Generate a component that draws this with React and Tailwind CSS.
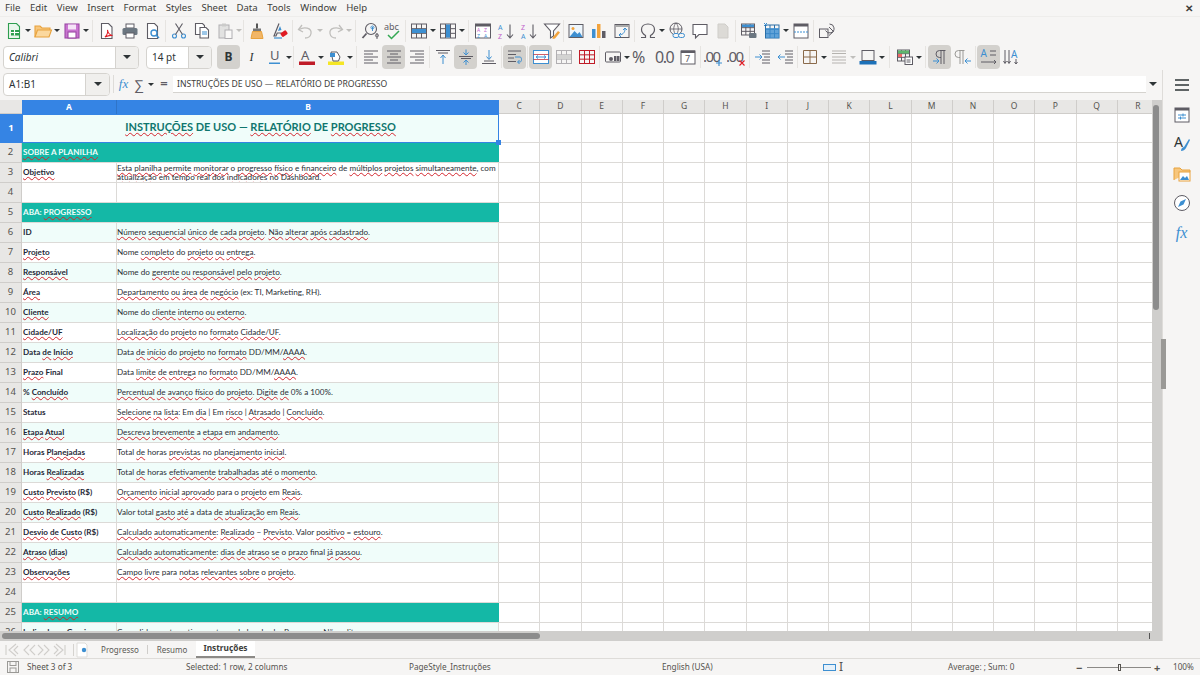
import React from "react";

const ui = { fontFamily: '"Noto Sans", sans-serif' };
const sheetFont = { fontFamily: 'Lato, "Open Sans", sans-serif' };

const B = "#3d8fd1";
const D = "#5e5c64";
const O = "#e8a23c";
const sw = { fill: "none", strokeWidth: 1.1 };

const grid = (x, y, w, h, c) => (
  <g fill="none" stroke={c} strokeWidth="1">
    <rect x={x} y={y} width={w} height={h} />
    <path d={`M${x} ${y + h / 3}h${w}M${x} ${y + (2 * h) / 3}h${w}M${x + w / 3} ${y}v${h}M${x + (2 * w) / 3} ${y}v${h}`} />
  </g>
);

const icons = {
  new: <g {...sw}><path d="M4.5 2.5h8l3 3v12h-11z" stroke="#2e9e4f" fill="#eaf6ec" /><rect x="7" y="9" width="8" height="5.5" fill="#2e9e4f" /><path d="M7 11.5h8M10.5 9v5.5" stroke="#fff" /></g>,
  open: <g strokeWidth="1.1"><path d="M2 16V5h5l2 2h8v3" fill="#f7c67c" stroke={O} /><path d="M2 16l2.5-7h14L16 16z" fill="#fbd89e" stroke={O} /></g>,
  save: <g strokeWidth="1.1"><rect x="3" y="3" width="14" height="14" fill="#c974d0" stroke="#9b4aa5" /><rect x="6" y="3.5" width="8" height="5" fill="#f5e4f7" /><rect x="6" y="11" width="8" height="6" fill="#fff" stroke="#9b4aa5" /></g>,
  pdf: <g {...sw}><path d="M4.5 2.5h7l3.5 3.5v11.5h-10.500z" stroke={D} fill="#fff" /><path d="M8 16c2-2 3-5 2.500-7 .5 3 2 5 5 5.500-3-.5-5.500.5-7.500 1.500z" stroke="#e01b24" /></g>,
  print: <g><rect x="6" y="3" width="8" height="4" fill="#fff" stroke={D} /><rect x="2.500" y="7" width="15" height="7" rx="1.500" fill="#6b7680" /><rect x="6" y="12" width="8" height="5" fill="#fff" stroke={D} /></g>,
  preview: <g {...sw}><path d="M4.500 2.500h7l3 3v12h-10z" stroke={D} fill="#fff" /><circle cx="11" cy="12" r="3" stroke={B} strokeWidth="1.400" /><path d="M13 14l3 3" stroke={B} strokeWidth="1.600" /></g>,
  cut: <g {...sw} stroke={B}><circle cx="5.500" cy="15" r="2" /><circle cx="14.500" cy="15" r="2" /><path d="M6.500 13.500L13.500 2.500M13.500 13.500L6.500 2.500" stroke={D} /></g>,
  copy: <g {...sw}><path d="M3.500 2.500h7l2 2v9h-9z" stroke={D} fill="#fff" /><path d="M8 6.500h6l2.500 2.500v8h-8.500z" stroke={D} fill="#fff" /><path d="M10 11h5M10 13h5" stroke={B} /></g>,
  paste: <g opacity=".45"><rect x="4" y="4" width="10" height="13" fill="#ccc" stroke={D} /><rect x="7" y="2.500" width="4" height="3" fill="#999" /><rect x="10" y="9" width="7" height="8.500" fill="#fff" stroke={D} /></g>,
  clone: <g><path d="M9 2.500h2v5H9z" fill="#555" /><rect x="6" y="7.500" width="8" height="3" fill="#777" /><path d="M5.500 10.500h9l1.500 7H4z" fill="#f2b666" stroke={O} /></g>,
  clear: <g><path d="M9 2.500L4 15h2l1.200-3h4l.8 2" fill="none" stroke={D} strokeWidth="1.200" /><path d="M8 10l2-5 1.500 4z" fill={B} /><rect x="11" y="10.500" width="6.500" height="4.500" rx="1" fill="#e01b24" transform="rotate(-35 14 13)" /><path d="M4 17h8" stroke={B} strokeWidth="1.200" /></g>,
  undo: <g fill="none" stroke="#c0bfbc" strokeWidth="1.300"><path d="M6 4L2.500 8.500 7 11" /><path d="M3 8.500c5-3 13-2 12 4-.5 3-3 4.500-6 4.500" /></g>,
  redo: <g fill="none" stroke="#c0bfbc" strokeWidth="1.300"><path d="M14 4l3.500 4.500L13 11" /><path d="M17 8.500c-5-3-13-2-12 4 .5 3 3 4.500 6 4.500" /></g>,
  find: <g fill="none"><circle cx="11" cy="8" r="5.500" stroke={D} strokeWidth="1.100" /><path d="M6.500 12.500L2.500 17" stroke={D} strokeWidth="1.800" /><path d="M12.500 6v4M12.500 8a1.500 1.500 0 1 0-.1 0" stroke={B} /><path d="M17 12v6M17 16a1.500 1.500 0 1 0-.1 0" stroke={D} /></g>,
  spell: <g><text x="1" y="9" fontSize="9" fill={D} fontFamily="Noto Sans">abc</text><path d="M5 14l3.500 3.500L16 10" fill="none" stroke="#33a852" strokeWidth="1.500" /></g>,
  rows: <g>{grid(2.5, 3, 15, 14, D)}<rect x="3" y="8" width="14" height="4" fill={B} /></g>,
  cols: <g>{grid(2.5, 3, 15, 14, D)}<rect x="8" y="3.500" width="4" height="13" fill={B} /></g>,
  sort: <g><rect x="2.500" y="3" width="15" height="14" fill="#fff" stroke={D} /><rect x="2.500" y="3" width="15" height="2.500" fill={D} /><text x="4" y="10.500" fontSize="5" fill="#c061cb" fontFamily="Noto Sans">A</text><text x="11" y="10.500" fontSize="5" fill="#c061cb" fontFamily="Noto Sans">Z</text><text x="4" y="16.500" fontSize="5" fill={B} fontFamily="Noto Sans">Z</text><text x="11" y="16.500" fontSize="5" fill={B} fontFamily="Noto Sans">A</text></g>,
  asc: <g><text x="2" y="9" fontSize="7" fill={B} fontFamily="Noto Sans">A</text><text x="2" y="18" fontSize="7" fill="#c061cb" fontFamily="Noto Sans">Z</text><path d="M14 3.500v13M11 13.500l3 3.500 3-3.500" fill="none" stroke={D} strokeWidth="1.100" /></g>,
  desc: <g><text x="2" y="9" fontSize="7" fill="#c061cb" fontFamily="Noto Sans">Z</text><text x="2" y="18" fontSize="7" fill={B} fontFamily="Noto Sans">A</text><path d="M14 3.500v13M11 13.500l3 3.500 3-3.500" fill="none" stroke={D} strokeWidth="1.100" /></g>,
  filter: <g><path d="M2.500 3h15l-6 7v5l-3 2v-7z" fill="#fff" stroke={D} strokeWidth="1.100" /><path d="M11 16l5-6 2 1.500-5 6-2.500.5z" fill="#f2a33c" /></g>,
  image: <g><rect x="3" y="3.500" width="14" height="13" fill="#eef6fc" stroke={D} /><circle cx="7" cy="7.500" r="1.500" fill="#f2a33c" /><path d="M3.500 16l5-6 3 3 2-2 3 5z" fill={B} /></g>,
  chart: <g><rect x="3" y="8" width="3.500" height="9" fill={B} /><rect x="8" y="3" width="3.500" height="14" fill="#f2a33c" /><rect x="13" y="10" width="3.500" height="7" fill={D} /></g>,
  pivot: <g><rect x="3" y="3.500" width="14" height="13" fill="#f6f5f4" stroke={D} /><rect x="3.500" y="4" width="13" height="2" fill="#aaa" /><path d="M7 14c3 0 6-2 6-6M11 9l2-2 2 2M9 12l-2 2 2 2" fill="none" stroke={B} /></g>,
  omega: <path d="M3 16.500h4.500v-2C5 13 3.500 11 3.500 8.500 3.500 5.200 6.300 3 10 3s6.500 2.200 6.500 5.500c0 2.500-1.500 4.500-4 6v2H17" fill="none" stroke={D} strokeWidth="1.200" />,
  link: <g fill="none"><circle cx="9" cy="8" r="6" stroke={D} /><path d="M3 8h12M9 2c-3 3-3 9 0 12M9 2c3 3 3 9 0 12" stroke={D} strokeWidth=".8" /><rect x="6" y="12.500" width="6" height="4" rx="2" fill="#f6f5f4" stroke={B} /><rect x="11.500" y="12.500" width="6" height="4" rx="2" fill="#f6f5f4" stroke={B} /></g>,
  comment: <path d="M3 3.500h14v10H9l-3.500 3.500v-3.500H3z" fill="#fff" stroke={D} strokeWidth="1.100" />,
  header: <path d="M5 3h7l3 3v11H5z" fill="#dcdad6" stroke="#cfcdc9" />,
  area: <g>{grid(2.5, 3, 13, 11, D)}<rect x="3" y="3.500" width="12" height="2.500" fill={B} /><rect x="10" y="12" width="7.500" height="5" rx="1" fill="#6b7680" /></g>,
  freeze: <g>{grid(3.5, 4, 13.5, 13, "#2a6ea6")}<rect x="4" y="7" width="13" height="10" fill={B} opacity=".8" /><path d="M2 2l3 3M5 2L2 5" stroke={B} /></g>,
  split: <g><rect x="3" y="3" width="14" height="14" fill="#fff" stroke={D} /><rect x="3" y="3" width="14" height="2.500" fill={D} /><path d="M3 11h14" stroke={B} strokeDasharray="2 1" /></g>,
  shapes: <g fill="none" stroke={D}><rect x="2.500" y="8" width="8.500" height="8.500" fill="#f6f5f4" /><path d="M12.500 3a4.500 4.500 0 1 1-4 6.500" /><path d="M12 6l4.500 4.500-4.500 4" /></g>,
  underline: <g><text x="5" y="13" fontSize="13" fill={D} fontFamily="Noto Sans">U</text><rect x="4" y="15.500" width="11" height="1.500" fill={B} /></g>,
  color: <g><text x="4" y="13" fontSize="13" fill={D} fontFamily="Noto Sans">A</text><rect x="2" y="14.500" width="16" height="3.500" fill="#c01c28" /></g>,
  hl: <g><rect x="2" y="14.500" width="16" height="3.500" fill="#f5e625" /><path d="M5 5h6l3 5-1.500 4H7z" fill="#fff" stroke={D} /><rect x="4" y="6" width="5" height="4" fill={B} /></g>,
  left: <path d="M3 4h14M3 7h9M3 10h14M3 13h9M3 16h14" stroke={D} fill="none" />,
  center: <path d="M3 4h14M6 7h8M3 10h14M6 13h8M3 16h14" stroke={D} fill="none" />,
  right: <path d="M3 4h14M8 7h9M3 10h14M8 13h9M3 16h14" stroke={D} fill="none" />,
  top: <g fill="none"><path d="M3 3.500h14M5 6h10" stroke={D} /><path d="M10 8v9M7.500 11l2.500-3 2.500 3" stroke={B} /></g>,
  middle: <g fill="none"><path d="M3 9.500h14M5 11.500h10" stroke={D} /><path d="M10 2.500v5M7.500 5.500l2.500 2.500 2.500-2.500M10 18v-5M7.500 15.500l2.500-2.500 2.500 2.500" stroke={B} /></g>,
  bottom: <g fill="none"><path d="M3 16.500h14M5 14h10" stroke={D} /><path d="M10 3v9M7.500 9.500l2.500 3 2.500-3" stroke={B} /></g>,
  wrap: <g fill="none"><path d="M3 4h13M3 7.500h8M3 11h6M3 14.500h8" stroke={D} /><path d="M10 10h5c2 0 2 5 0 5h-2M14.500 13l-2 2 2 2" stroke={B} /></g>,
  merge: <g><rect x="2.500" y="3.500" width="15" height="13" fill="#fff" stroke={B} /><path d="M2.500 7.500h15M2.500 12.500h15" stroke="#c01c28" opacity=".7" /><path d="M6 10h8M5 10l2-1.500M5 10l2 1.500M15 10l-2-1.500M15 10l-2 1.500" stroke={B} /></g>,
  merge2: <g opacity=".45">{grid(2.5, 3.5, 15, 13, D)}<rect x="3" y="7.800" width="14" height="4.400" fill="#aaa" /></g>,
  unmerge: <g>{grid(2.5, 3.5, 15, 13, "#c01c28")}</g>,
  format: <g><rect x="2.500" y="5" width="15" height="10" rx="1" fill="#f6f5f4" stroke={D} /><circle cx="8" cy="12" r="2" fill={D} /><rect x="11" y="9" width="2.500" height="5" fill={D} /><rect x="14" y="9" width="2.500" height="5" fill={D} /></g>,
  percent: <text x="0" y="16" fontSize="16" fill={D} fontFamily="Noto Sans">%</text>,
  num: <text x="0" y="16" fontSize="16" fill={D} letterSpacing="-1.500" fontFamily="Noto Sans">0.0</text>,
  date: <g><rect x="3" y="4" width="14" height="13" fill="#fff" stroke={D} /><rect x="3" y="3.500" width="14" height="2.500" fill={D} /><text x="7" y="15" fontSize="9" fill={D} fontFamily="Noto Sans">7</text></g>,
  addDec: <g><text x="-1" y="15" fontSize="15" fill={D} letterSpacing="-1.500" fontFamily="Noto Sans">.00</text><path d="M15 13v6M12 16h6" stroke={B} strokeWidth="1.200" /></g>,
  delDec: <g><text x="-1" y="15" fontSize="15" fill={D} letterSpacing="-1.500" fontFamily="Noto Sans">.00</text><path d="M12.500 13.500l5 5M17.500 13.500l-5 5" stroke="#e01b24" strokeWidth="1.100" /></g>,
  indent: <g fill="none"><path d="M9 4h8M9 7h8M11 10h6M9 13h8M9 16h8" stroke={D} /><path d="M2 10h7M6.500 7.500l2.500 2.500-2.500 2.500" stroke={B} /></g>,
  outdent: <g fill="none"><path d="M9 4h8M9 7h8M11 10h6M9 13h8M9 16h8" stroke={D} /><path d="M9 10H2M4.500 7.500L2 10l2.500 2.500" stroke={B} /></g>,
  borders: <path d="M3.500 3.500h13v13h-13zM10 3.500v13M3.500 10h13" fill="none" stroke="#8a6a4a" />,
  bstyle: <path d="M3 4h14M3 6.500h14M3 10h14M3 13h14M3 16h14" fill="none" stroke="#b5b3af" strokeWidth="1.200" />,
  bcolor: <g><rect x="4" y="3.500" width="12" height="10" fill="#f6f5f4" stroke={D} /><rect x="1.500" y="14" width="17" height="3.500" fill="#1c71b8" /></g>,
  cond: <g>{grid(2.5, 3, 12, 11, D)}<rect x="3" y="3.500" width="11" height="3" fill="#5fb56c" /><rect x="3" y="7" width="4" height="3" fill="#e66" /><rect x="10" y="10" width="7.500" height="7.500" fill="#fff" stroke={D} /><path d="M11.500 13h4M11.500 15h4" stroke={D} /></g>,
  ltr: <g fill="none"><path d="M11 3v14M14 3v14M15.500 3.500H9.500a3.500 3.500 0 0 0 0 7H11" stroke={D} /><path d="M3 14h6M6.500 11.500L9 14l-2.500 2.500" stroke={B} /></g>,
  rtl: <g fill="none"><path d="M7 3v14M10 3v14M11.500 3.500H5.500a3.500 3.500 0 0 0 0 7H7" stroke="#9a9996" /><path d="M18 14h-6M14.500 11.500L12 14l2.500 2.500" stroke={B} /></g>,
  horiz: <g fill="none"><text x="1.500" y="10" fontSize="10" fill={B} stroke="none" fontFamily="Noto Sans">A</text><path d="M11 4h6M11 8h6M2 15h15M15 13l2 2-2 2" stroke={D} /></g>,
  vert: <g fill="none"><text x="9" y="11" fontSize="10" fill={B} stroke="none" fontFamily="Noto Sans">A</text><path d="M3 3v13M1.500 14l1.500 2.500L4.500 14M7 3v13M5.500 14L7 16.500 8.500 14M14 12v5M12.500 15l1.500 2 1.500-2" stroke={D} /></g>,
};

const row1 = ["new", "v", "open", "v", "save", "v", "s6", "pdf", "print", "preview", "s3", "cut", "copy", "paste", "d", "s3", "clone", "clear", "s3", "undo", "d", "redo", "d", "s6", "find", "spell", "s3", "rows", "v", "cols", "v", "s6", "sort", "asc", "desc", "filter", "s1", "image", "chart", "pivot", "s3", "omega", "v", "link", "comment", "header", "s3", "area", "freeze", "v", "split", "s3", "shapes"];
const row2 = ["s3", "color", "v", "hl", "v", "s6", "left", "*center", "right", "s3", "top", "*middle", "bottom", "s3", "*wrap", "s3", "*merge", "merge2", "unmerge", "s3", "format", "v", "percent", "num", "date", "s3", "addDec", "delDec", "s3", "indent", "outdent", "s1", "borders", "v", "bstyle", "d", "bcolor", "v", "s8", "cond", "v", "s6", "*ltr", "rtl", "s3", "*horiz", "vert"];

const sepClass = {
  s1: "w-px",
  s3: "w-[3px]",
  s6: "w-[6px]",
  s8: "w-[8px]",
};

function Caret({ faint }) {
  return (
    <span className={`w-0 h-0 border-x-[3px] border-x-transparent border-t-[3px] ${faint ? "border-t-[#c0bfbc]" : "border-t-[#2e3436]"}`} />
  );
}

function Tool({ name }) {
  if (sepClass[name]) {
    return (
      <div className={`${sepClass[name]} h-[22px] flex justify-center shrink-0`}>
        <div className="w-px h-full bg-[#e6e4e1]" />
      </div>
    );
  }
  if (name === "v" || name === "d") {
    return (
      <div className="w-[6px] h-[22px] flex items-center justify-center shrink-0">
        <Caret faint={name === "d"} />
      </div>
    );
  }
  const active = name[0] === "*";
  const key = active ? name.slice(1) : name;
  return (
    <div className={`w-[23px] h-[24px] rounded-[4px] flex items-center justify-center shrink-0 ${active ? "bg-[#d3d1cd]" : ""}`}>
      <svg width="20" height="20" viewBox="0 0 20 20">{icons[key]}</svg>
    </div>
  );
}

function Combo({ text, boxClass, arrowClass, italic }) {
  return (
    <div className={`h-[23px] flex border border-[#d5d3cf] rounded-[4px] overflow-hidden bg-white shrink-0 ${boxClass}`}>
      <div className={`flex-1 pl-[5px] flex items-center text-[10px] text-[#2e3436] ${italic ? "italic" : ""}`}>{text}</div>
      <div className={`${arrowClass} bg-[#f0efed] border-l border-[#d5d3cf] flex items-center justify-center`}>
        <span className="w-0 h-0 border-x-[4px] border-x-transparent border-t-[4px] border-t-[#2e3436]" />
      </div>
    </div>
  );
}

function Marked({ text }) {
  // *palavra* = sublinhado do corretor ortografico
  return text.split("*").map((part, i) =>
    i % 2 ? (
      <span key={i} className="underline decoration-wavy decoration-[#d3262e] decoration-[0.7px] underline-offset-[1px]">{part}</span>
    ) : (
      <span key={i}>{part}</span>
    )
  );
}

const rows = [
  { n: 2, section: "*SOBRE* A *PLANILHA*" },
  { n: 3, a: "*Objetivo*", two: ["*Esta* *planilha* *permite* *monitorar* o *progresso* *físico* e *financeiro* de *múltiplos* *projetos* *simultaneamente*, com", "*atualização* em tempo real dos *indicadores* no Dashboard."] },
  { n: 4 },
  { n: 5, section: "ABA: *PROGRESSO*" },
  { n: 6, alt: true, a: "ID", b: "*Número* *sequencial* *único* *de* *cada* *projeto*. *Não* *alterar* *após* *cadastrado*." },
  { n: 7, a: "*Projeto*", b: "Nome *completo* do *projeto* *ou* *entrega*." },
  { n: 8, alt: true, a: "*Responsável*", b: "Nome do *gerente* *ou* *responsável* *pelo* *projeto*." },
  { n: 9, a: "*Área*", b: "*Departamento* *ou* *área* *de* *negócio* (ex: TI, Marketing, RH)." },
  { n: 10, alt: true, a: "*Cliente*", b: "Nome do *cliente* *interno* *ou* *externo*." },
  { n: 11, a: "*Cidade/UF*", b: "*Localização* do *projeto* no *formato* *Cidade/UF*." },
  { n: 12, alt: true, a: "Data *de* *Início*", b: "Data *de* *início* do *projeto* no *formato* DD/MM/*AAAA*." },
  { n: 13, a: "*Prazo* Final", b: "Data *limite* *de* *entrega* no *formato* DD/MM/*AAAA*." },
  { n: 14, alt: true, a: "% *Concluído*", b: "*Percentual* *de* *avanço* *físico* do *projeto*. *Digite* *de* 0% a 100%." },
  { n: 15, a: "Status", b: "*Selecione* *na* *lista*: Em *dia* | Em *risco* | *Atrasado* | *Concluído*." },
  { n: 16, alt: true, a: "*Etapa* *Atual*", b: "*Descreva* *brevemente* a *etapa* em *andamento*." },
  { n: 17, a: "Horas *Planejadas*", b: "Total *de* horas *previstas* no *planejamento* *inicial*." },
  { n: 18, alt: true, a: "Horas *Realizadas*", b: "Total *de* horas *efetivamente* *trabalhadas* *até* o *momento*." },
  { n: 19, a: "*Custo* *Previsto* (R$)", b: "*Orçamento* *inicial* *aprovado* para o *projeto* em *Reais*." },
  { n: 20, alt: true, a: "*Custo* *Realizado* (R$)", b: "Valor total *gasto* *até* a data *de* *atualização* em *Reais*." },
  { n: 21, a: "*Desvio* *de* *Custo* (R$)", b: "*Calculado* *automaticamente*: *Realizado* − *Previsto*. Valor *positivo* = *estouro*." },
  { n: 22, alt: true, a: "*Atraso* (*dias*)", b: "*Calculado* *automaticamente*: *dias* *de* *atraso* *se* o *prazo* final *já* *passou*." },
  { n: 23, a: "*Observações*", b: "*Campo* *livre* para *notas* *relevantes* *sobre* o *projeto*." },
  { n: 24 },
  { n: 25, section: "ABA: *RESUMO*" },
  { n: 26, alt: true, a: "Indicadores Gerais", b: "Consolidam automaticamente os dados da aba Progresso. Não editar." },
];

const letters = ["C", "D", "E", "F", "G", "H", "I", "J", "K", "L", "M", "N", "O", "P", "Q", "R"];
const gridCols = "grid grid-cols-[22px_95px_382px_repeat(16,41.25px)]";
const line = "border-r border-b border-[#dcdad7]";

function EmptyCells() {
  return letters.map((l) => <div key={l} className={line} />);
}

function RowHead({ n, selected }) {
  return (
    <div
      style={ui}
      className={`flex items-center justify-center text-[9.5px] ${selected ? "bg-[#3584e4] text-white font-bold" : "bg-[#e8e7e5] text-[#55534f] border-r border-b border-[#cfcdca]"}`}
    >
      {n}
    </div>
  );
}

function SheetRow({ r }) {
  const bg = r.alt ? "bg-[#f0fdfa]" : "bg-white";
  return (
    <div className={`${gridCols} h-[20px] shrink-0`}>
      <RowHead n={r.n} />
      {r.section ? (
        <div style={sheetFont} className="col-span-2 bg-[#14b8a6] border-b border-[#dcdad7] flex items-center pl-px text-[8.15px] font-bold text-[#f0fdfa]">
          <span><Marked text={r.section} /></span>
        </div>
      ) : (
        <>
          <div style={sheetFont} className={`${bg} ${line} flex items-center pl-px text-[8.15px] font-bold text-[#1f2937] whitespace-nowrap overflow-hidden`}>
            {r.a && <span><Marked text={r.a} /></span>}
          </div>
          <div style={sheetFont} className={`${bg} ${line} flex flex-col justify-center text-[8.15px] text-[#2b2f36] whitespace-nowrap overflow-hidden`}>
            {r.b && <span><Marked text={r.b} /></span>}
            {r.two && r.two.map((t) => <span key={t} className="leading-[8.5px]"><Marked text={t} /></span>)}
          </div>
        </>
      )}
      <EmptyCells />
    </div>
  );
}

function Sheet() {
  return (
    <div className="flex-1 min-h-0 overflow-hidden bg-white">
      <div className={`${gridCols} h-[14px]`} style={ui}>
        <div className="bg-[#e8e7e5] border-b border-[#cfcdca]" />
        <div className="bg-[#3584e4] text-white font-bold text-[8.5px] flex items-center justify-center border-r border-[#2f74c8]">A</div>
        <div className="bg-[#3584e4] text-white font-bold text-[8.5px] flex items-center justify-center">B</div>
        {letters.map((l) => (
          <div key={l} className="bg-[#e8e7e5] text-[#55534f] text-[8.5px] flex items-center justify-center border-r border-b border-[#cfcdca]">{l}</div>
        ))}
      </div>
      <div className={`${gridCols} h-[29px]`}>
        <RowHead n={1} selected />
        <div style={sheetFont} className="relative col-span-2 bg-[#f0fdfa] border border-[#3584e4] flex items-center justify-center pb-[2px] text-[11px] font-bold text-[#0f766e]">
          <span><Marked text="*INSTRUÇÕES* DE USO — *RELATÓRIO* DE *PROGRESSO*" /></span>
          <div className="absolute right-[-3px] bottom-[-3px] w-[5px] h-[5px] bg-[#3584e4]" />
        </div>
        <EmptyCells />
      </div>
      {rows.map((r) => <SheetRow key={r.n} r={r} />)}
    </div>
  );
}

function SideIcon({ children }) {
  return <svg width="20" height="20" viewBox="0 0 20 20">{children}</svg>;
}

function Sidebar() {
  return (
    <div className="w-[38px] shrink-0 bg-[#f6f5f4] border-l border-[#dedcd9] flex flex-col items-center pt-[5px] gap-[9.500px]">
      <SideIcon><path d="M3 5h14M3 10h14M3 15h14" stroke="#2e3436" strokeWidth="1.500" /></SideIcon>
      <SideIcon>
        <rect x="3" y="3" width="14" height="14" fill="#fff" stroke={D} />
        <rect x="3" y="3" width="14" height="2.500" fill={D} />
        <path d="M6 10h8M6 13h8M11 8.500v3M8.500 11.500v3" stroke={B} />
      </SideIcon>
      <SideIcon>
        <text x="2" y="13" fontSize="14" fill="#2e3436" fontFamily="Noto Sans">A</text>
        <path d="M9 17c0-3 2-4 3-4l5-8 1 1-4 8c-1 2-3 3-5 3z" fill={B} />
      </SideIcon>
      <SideIcon>
        <path d="M2 16V4h6l2 2h8v2" fill="#f7c67c" stroke={O} />
        <rect x="7" y="8" width="11" height="9" fill="#fff" stroke={O} />
        <path d="M8 16l3-4 2 2 2-2 2 4z" fill={B} />
      </SideIcon>
      <SideIcon>
        <circle cx="10" cy="10" r="7.500" fill="#fff" stroke={D} />
        <path d="M14 6l-2.500 5.500L6 14l2.500-5.500z" fill={B} />
      </SideIcon>
      <span className="text-[16px] italic text-[#3d8fd1] leading-[20px]" style={{ fontFamily: '"Liberation Serif", serif' }}>fx</span>
    </div>
  );
}

function NavArrows() {
  return (
    <svg width="64" height="14" viewBox="0 0 64 14" fill="none" stroke="#d0cecb" strokeWidth="1.100">
      <path d="M2 2v10M12 1L5 7l7 6M14 3l-4 4 4 4" />
      <path d="M25 2l-5 5 5 5M31 2l-5 5 5 5" />
      <path d="M34 2l5 5-5 5M40 2l5 5-5 5" />
      <path d="M50 3l4 4-4 4M52 1l7 6-7 6M61 2v10" />
    </svg>
  );
}

export default function App() {
  return (
    <div style={ui} className="w-[1200px] h-[675px] overflow-hidden bg-[#f6f5f4] flex flex-col text-[#2e3436] relative">
      {/* menu */}
      <div className="h-[17px] shrink-0 flex items-center justify-between pl-[5px] pr-[7px] border-b border-[#eeedeb] text-[9.6px] text-[#3d3d3a]">
        <div className="flex gap-[9.6px]">
          {["File", "Edit", "View", "Insert", "Format", "Styles", "Sheet", "Data", "Tools", "Window", "Help"].map((m) => <span key={m}>{m}</span>)}
        </div>
        <span className="text-[10px] font-bold">✕</span>
      </div>

      {/* barras */}
      <div className="h-[27px] shrink-0 flex items-center pl-[2px]">
        {row1.map((t, i) => <Tool key={i} name={t} />)}
      </div>
      <div className="h-[26px] shrink-0 flex items-center pl-[3px]">
        <Combo text="Calibri" italic boxClass="w-[136px]" arrowClass="w-[23px]" />
        <div className="w-[7px]" />
        <Combo text="14 pt" boxClass="w-[66px]" arrowClass="w-[23px]" />
        <div className="w-[5px]" />
        <div className="w-[23px] h-[24px] rounded-[4px] bg-[#d3d1cd] flex items-center justify-center text-[12px] font-bold" >B</div>
        <div className="w-[23px] h-[24px] flex items-center justify-center text-[12px] italic" style={{ fontFamily: '"Liberation Serif", serif' }}>I</div>
        <Tool name="underline" />
        <Tool name="v" />
        {row2.map((t, i) => <Tool key={i} name={t} />)}
      </div>

      <div className="flex-1 min-h-0 flex flex-col">
        <div className="flex-1 min-h-0 flex">
          {/* area principal */}
          <div className="flex-1 min-w-0 flex flex-col">
            <div className="h-[28px] shrink-0 flex items-center pl-[3px] pr-[3px]">
              <Combo text="A1:B1" boxClass="w-[107px]" arrowClass="w-[24px]" />
              <div className="w-px h-[18px] bg-[#dedcd9] ml-[3px]" />
              <span className="w-[19px] text-center text-[13px] italic text-[#3d8fd1]" style={{ fontFamily: '"Liberation Serif", serif' }}>fx</span>
              <span className="w-[12px] text-center text-[14px] text-[#5e5c64]">∑</span>
              <div className="w-[12px] flex justify-center"><Caret /></div>
              <span className="w-[14px] text-center text-[13px] text-[#5e5c64] font-bold">=</span>
              <div className="w-[973px] h-[17px] ml-[2px] bg-white border-b border-[#d5d3cf] flex items-center pl-[4px] pt-px text-[8.65px] text-[#3d3d3a]">
                INSTRUÇÕES DE USO — RELATÓRIO DE PROGRESSO
              </div>
              <div className="flex-1 flex justify-center"><span className="w-0 h-0 border-x-[4px] border-x-transparent border-t-[4px] border-t-[#2e3436]" /></div>
            </div>
            <div className="h-[2px] shrink-0" />

            <div className="flex-1 min-h-0 flex">
              <div className="w-[1152px] flex flex-col">
                <Sheet />
                <div className="h-[10px] shrink-0 bg-[#cfcecc] flex items-center pl-[2px] pr-[2px] justify-between">
                  <div className="w-[538px] h-[6px] rounded-full bg-[#8c8c8c]" />
                  <div className="w-px h-[6px] bg-[#555]" />
                </div>
              </div>
              <div className="w-[10px] shrink-0 bg-[#cfcecc] pt-[5px] pl-[1px]">
                <div className="w-[6px] h-[205px] rounded-full bg-[#8c8c8c]" />
              </div>
            </div>
          </div>
          <Sidebar />
        </div>

        {/* abas */}
        <div className="h-[17px] shrink-0 flex items-center pl-[4px] text-[8px] text-[#5a5955]">
          <NavArrows />
          <div className="w-px h-[12px] bg-[#d5d3cf] ml-[5px]" />
          <svg width="16" height="16" viewBox="0 0 16 16" className="shrink-0">
            <path d="M3 1h8l2 2v12H3z" fill="#fff" stroke="#dedcd9" />
            <circle cx="10" cy="8" r="2.200" fill={B} />
          </svg>
          <span className="ml-[3px] w-[54px] text-center">Progresso</span>
          <div className="w-px h-[9px] bg-[#cfcdca]" />
          <span className="w-[48px] text-center">Resumo</span>
          <span className="w-[59px] h-full bg-white border-b-2 border-[#8c8a87] flex items-center justify-center font-bold text-[8.3px] text-[#3d3d3a]">Instruções</span>
        </div>

        {/* status */}
        <div className="h-[17px] shrink-0 border-t border-[#dedcd9] flex items-center text-[8.2px] text-[#55534f]">
          <div className="w-[27px] pl-[7px] flex">
            <svg width="12" height="12" viewBox="0 0 12 12" fill="none" stroke="#9a9996"><rect x=".5" y=".5" width="11" height="11" /><rect x="3" y=".5" width="6" height="4" /><rect x="3" y="7" width="6" height="4.500" /></svg>
          </div>
          <span className="w-[159px]">Sheet 3 of 3</span>
          <span className="w-[223px]">Selected: 1 row, 2 columns</span>
          <span className="w-[253px]">PageStyle_Instruções</span>
          <span className="w-[156px]">English (USA)</span>
          <div className="w-[130px] flex items-center gap-[3px] pl-[5px]">
            <div className="w-[13px] h-[7px] border border-[#3d8fd1] bg-[#e6f1fa]" />
            <span className="text-[12px] leading-none text-[#55534f]">I</span>
          </div>
          <span className="w-[128px]">Average: ; Sum: 0</span>
          <div className="w-[92px] flex items-center">
            <span className="w-[11px] font-bold text-[11px] leading-none">−</span>
            <div className="w-[64px] h-px bg-[#8c8a87] flex justify-center items-center"><div className="w-[3px] h-[7px] bg-[#f6f5f4] border border-[#55534f]" /></div>
            <span className="ml-[3px] font-bold text-[11px] leading-none">+</span>
          </div>
          <span className="ml-[5px]">100%</span>
        </div>
      </div>

      {/* puxador da barra lateral */}
      <div className="absolute left-[1161px] top-[339px] w-[5px] h-[50px] bg-[#9a9996]" />
    </div>
  );
}
